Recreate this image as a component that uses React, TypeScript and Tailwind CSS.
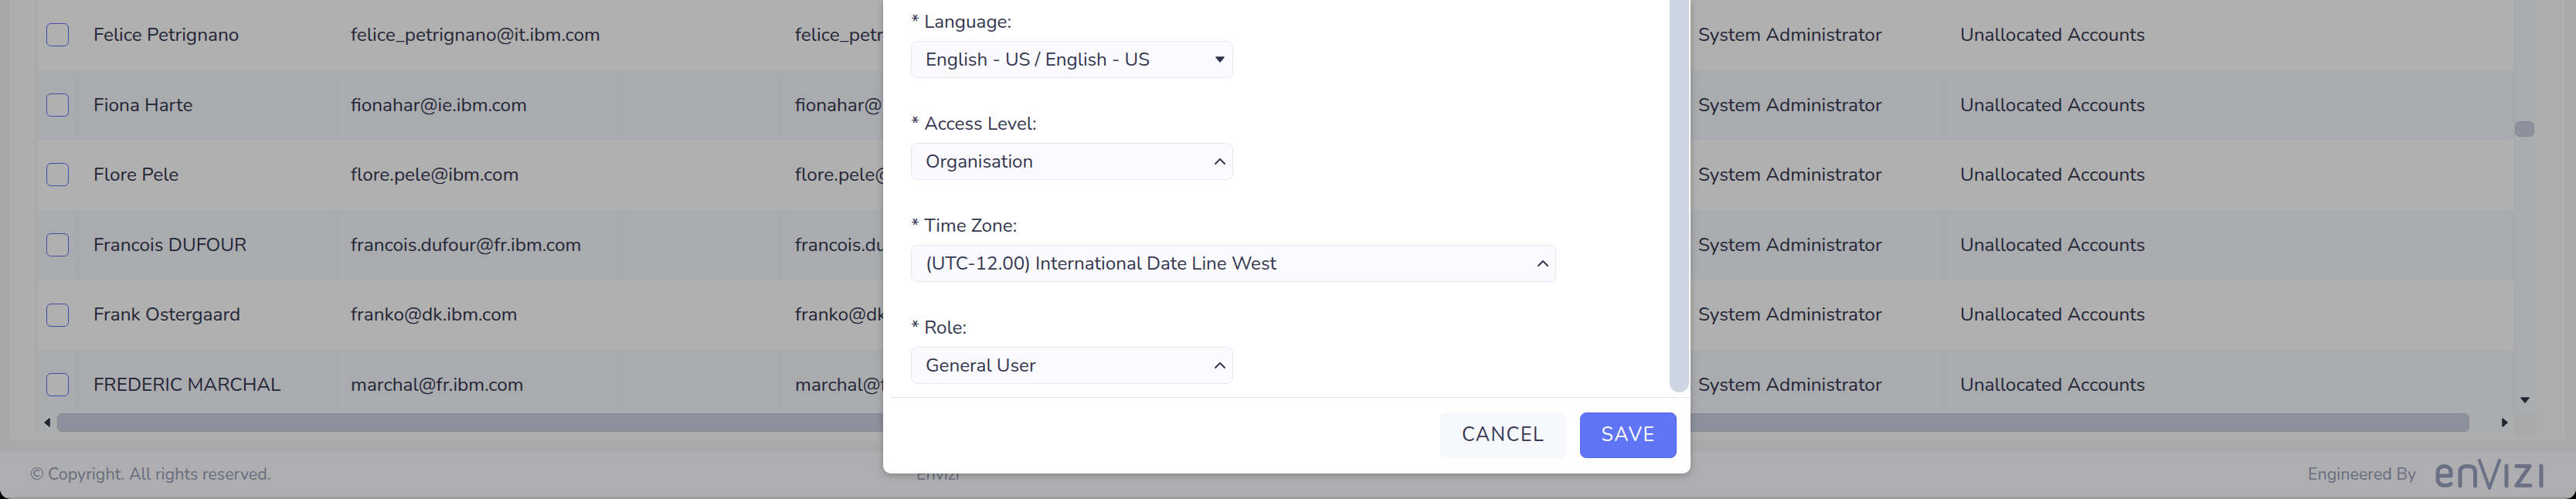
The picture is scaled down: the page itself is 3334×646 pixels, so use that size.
import React from 'react';
import { ChevronUp } from 'lucide-react';

const users = [
  { name: 'Felice Petrignano', email: 'felice_petrignano@it.ibm.com' },
  { name: 'Fiona Harte', email: 'fionahar@ie.ibm.com' },
  { name: 'Flore Pele', email: 'flore.pele@ibm.com' },
  { name: 'Francois DUFOUR', email: 'francois.dufour@fr.ibm.com' },
  { name: 'Frank Ostergaard', email: 'franko@dk.ibm.com' },
  { name: 'FREDERIC MARCHAL', email: 'marchal@fr.ibm.com' },
];

const Caret = ({ dir }: { dir: 'down' | 'left' | 'right' }) => {
  const points = {
    down: '1,3 11,3 6,9',
    left: '9,1 9,11 3,6',
    right: '3,1 3,11 9,6',
  }[dir];
  return (
    <svg width="12" height="12" viewBox="0 0 12 12" className="shrink-0 fill-[#30324a] stroke-[#30324a]">
      <polygon points={points} strokeWidth="1.5" strokeLinejoin="round" />
    </svg>
  );
};

const Row = ({ user, index }: { user: { name: string; email: string }; index: number }) => {
  const even = index % 2 === 1;
  const line = even ? 'border-r border-[#f0f2f8]' : '';
  return (
    <div className={`flex h-[90.6px] shrink-0 items-center text-[24.4px] text-[#34364f] ${even ? 'bg-[#f5f8fe]' : 'bg-white'}`}>
      <div className={`flex h-full w-[53px] shrink-0 items-center pl-[12px] ${line}`}>
        <div className="h-[30px] w-[29px] rounded-md border border-[#5f75f5] bg-white" />
      </div>
      <div className={`flex h-full w-[334px] shrink-0 items-center pl-[20px] ${line}`}>{user.name}</div>
      <div className={`flex h-full w-[366px] shrink-0 items-center pl-[19px] ${line}`}>{user.email}</div>
      <div className={`h-full w-[209px] shrink-0 ${line}`} />
      <div className={`flex h-full w-[1167px] shrink-0 items-center pl-[19px] ${line}`}>{user.email}</div>
      <div className={`flex h-full w-[340px] shrink-0 items-center pl-[21px] ${line}`}>System Administrator</div>
      <div className="flex h-full flex-1 items-center pl-[20px]">Unallocated Accounts</div>
    </div>
  );
};

const Field = ({ label, value, wide, open }: { label: string; value: string; wide?: boolean; open?: boolean }) => (
  <div className="mb-[41px]">
    <div className="mb-[7px] flex h-[36px] items-center pt-[2px] text-[24.2px] text-[#34364f]">* {label}:</div>
    <div className={`flex h-[48px] items-center justify-between rounded-lg border border-[#e6e9f5] bg-[#fbfbff] pl-[18px] text-[24.2px] text-[#34364f] ${wide ? 'w-[835px]' : 'w-[417px]'}`}>
      <span className="pt-[2px]">{value}</span>
      {open ? (
        <span className="mr-[10px] flex w-[12px] justify-center"><Caret dir="down" /></span>
      ) : (
        <ChevronUp size={24} strokeWidth={2} className="mr-[4px] text-[#34364f]" />
      )}
    </div>
  </div>
);

const EnviziLogo = () => (
  <svg width="142" height="44" viewBox="0 0 142 44" fill="none" stroke="#9aa4bf" strokeWidth="5" strokeLinecap="round" strokeLinejoin="round">
    <path d="M3 23 H20 V19 C20 13 16 10.5 11.5 10.5 C6 10.5 3 14 3 19 V26 C3 32 6 35.5 12 35.5 C15 35.5 18 35 20 33.5" />
    <path d="M32 36 V17 C32 12 36 10.5 42 10.5 C48 10.5 51.5 13 51.5 18 V36" />
    <path d="M57 3 L70 39 L83 3" strokeWidth="4" />
    <path d="M92 10 V36" />
    <path d="M105 10.5 H122 L105 35.5 H123" />
    <path d="M137 10 V36" />
  </svg>
);

export default function App() {
  return (
    <div className="relative h-[646px] w-[3334px] overflow-hidden bg-black font-['Nunito','Lato',sans-serif]">
      <div className="relative flex h-full flex-col overflow-hidden rounded-b-[14px] bg-[#f3f3f3]">
        {/* Page content */}
        <div className="ml-[12px] mr-[15px] flex h-[571px] shrink-0 flex-col bg-[#fbfbfb] pl-[35px] pr-[37px]">
          <div className="flex h-[535px] shrink-0 border-l border-[#eceef2]">
            <div className="flex w-[3206px] shrink-0 flex-col overflow-hidden">
              {users.map((user, index) => (
                <Row key={user.email} user={user} index={index} />
              ))}
            </div>
            {/* Vertical scrollbar */}
            <div className="flex flex-1 flex-col items-start border-l border-[#eceef2] bg-[#f8f9fd] pt-[157px]">
              <div className="h-[20px] w-[25px] rounded-md border border-[#c2c8d8] bg-[#cdd3e2]" />
              <div className="flex-1" />
              <div className="mb-[11px] ml-[7px]"><Caret dir="down" /></div>
            </div>
          </div>
          {/* Horizontal scrollbar */}
          <div className="flex h-[27px] shrink-0 items-start border-l border-[#eceef2] bg-[#f8f9fd]">
            <div className="flex h-[24px] w-[26px] shrink-0 items-center justify-center"><Caret dir="left" /></div>
            <div className="h-[24px] w-[3122px] shrink-0 rounded-md border border-[#c2c8d8] bg-[#cdd3e2]" />
            <div className="flex h-[24px] w-[58px] shrink-0 items-center justify-end pr-[6px]"><Caret dir="right" /></div>
            <div className="h-full flex-1 bg-[#f5f5f7]" />
          </div>
        </div>
        <div className="h-[13px] shrink-0" />
        {/* Footer */}
        <footer className="flex h-[61px] shrink-0 items-center border-y border-t-[#f6f6f6] border-b-[#c8c8c8] bg-[#fcfcff] pl-[39px] pr-[40px] text-[21.5px] text-[#97a0b8]">
          <span className="w-[1147px] shrink-0">© Copyright. All rights reserved.</span>
          <span>Envizi</span>
          <div className="ml-auto flex items-center gap-[25px]">
            <span>Engineered By</span>
            <EnviziLogo />
          </div>
        </footer>
      </div>

      {/* Dim layer behind the dialog */}
      <div className="absolute inset-0 bg-black/[0.31]" />

      {/* Dialog */}
      <div className="absolute left-[1143px] top-0 flex h-[613px] w-[1045px] flex-col rounded-b-[10px] bg-white shadow-[0_2px_8px_rgba(0,0,0,0.25)]">
        <div className="flex h-[508px] shrink-0 overflow-hidden">
          <div className="flex-1 overflow-hidden pl-[36px] pt-[10px]">
            <Field label="Language" value="English - US / English - US" open />
            <Field label="Access Level" value="Organisation" />
            <Field label="Time Zone" value="(UTC-12.00) International Date Line West" wide />
            <Field label="Role" value="General User" />
          </div>
          <div className="mr-[2px] w-[25px] shrink-0 rounded-b-full bg-[#cdd4e2]" />
        </div>
        <div className="mt-[6px] ml-[9px] border-t border-[#e4e8f2]" />
        <div className="flex justify-end gap-[18px] pr-[18px] pt-[19px]">
          <button className="h-[59px] w-[163px] rounded-lg bg-[#f7f8fe] text-[25px] tracking-[1.5px] text-[#34364f]">CANCEL</button>
          <button className="h-[59px] w-[125px] rounded-lg border border-[#4f66f0] bg-[#5f75f5] text-[25px] tracking-[1.5px] text-white">SAVE</button>
        </div>
      </div>
    </div>
  );
}
